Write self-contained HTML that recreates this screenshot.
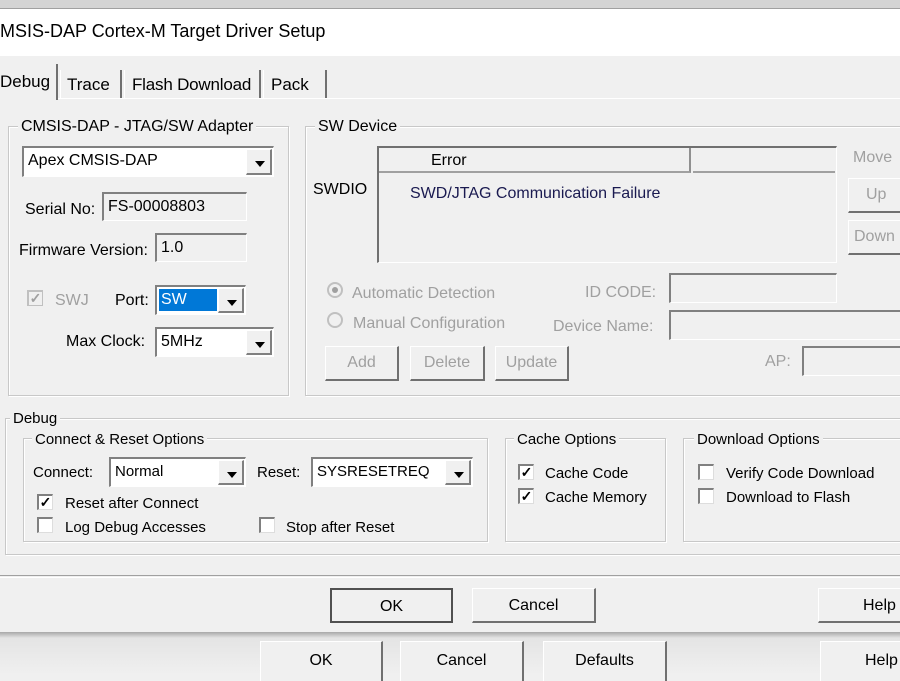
<!DOCTYPE html>
<html><head><meta charset="utf-8"><style>
*{box-sizing:border-box;margin:0;padding:0}
body{width:900px;height:675px;overflow:hidden;background:#f0f0f0;font-family:"Liberation Sans",sans-serif;font-size:16px;color:#000;position:relative}
.a{position:absolute;white-space:nowrap}
.t{margin-top:2px}
.grp{position:absolute;border:1px solid #c8c8c8;box-shadow:inset 1px 1px 0 #fff,1px 1px 0 #fff}
.lbl{position:absolute;background:#f0f0f0;padding:0 3px;line-height:18px;margin-top:1px}
.sunk{position:absolute;background:#f0f0f0;border-top:2px solid #808080;border-left:2px solid #808080;border-right:1px solid #fff;border-bottom:1px solid #fff;padding-left:4px;line-height:26px}
.white{background:#fff}
.dd{position:absolute;right:1px;top:1px;bottom:1px;width:26px;background:#f0f0f0;border-right:2px solid #808080;border-bottom:2px solid #808080;border-left:1px solid #fff;border-top:1px solid #fff}
.dd:after{content:"";position:absolute;left:8px;top:11px;border-left:5px solid transparent;border-right:5px solid transparent;border-top:6px solid #000}
.btn{position:absolute;background:#f0f0f0;border-top:1px solid #fff;border-left:1px solid #fff;border-right:2px solid #707070;border-bottom:2px solid #707070;text-align:center}
.dis{color:#a0a0a0}
.cb{position:absolute;width:16px;height:16px;background:#fff;border-top:2px solid #808080;border-left:2px solid #808080;border-right:1px solid #ddd;border-bottom:1px solid #ddd;font-size:14px;line-height:12px;text-align:center;font-weight:bold}
.rd{position:absolute;width:16px;height:16px;border-radius:50%;border:2px solid #c0c0c0;background:#f0f0f0}
</style></head><body>
<div class="a" style="left:0;top:0;width:900px;height:9px;background:#d4d4d4;border-bottom:1px solid #a0a0a0"></div>
<div class="a" style="left:0;top:9px;width:900px;height:47px;background:#fff"></div>
<div class="a" style="left:0;top:21px;font-size:18px">MSIS-DAP Cortex-M Target Driver Setup</div>
<div class="a" style="left:0;top:98px;width:900px;height:1px;background:#fff"></div>
<div class="a" style="left:0;top:64px;width:58px;height:36px;background:#f0f0f0;border-right:2px solid #707070"></div>
<div class="a" style="left:0;top:72px;font-size:17px">Debug</div>
<div class="a" style="left:60px;top:70px;width:62px;height:28px;border-right:2px solid #707070;border-left:1px solid #fff"></div>
<div class="a" style="left:67px;top:75px;font-size:17px">Trace</div>
<div class="a" style="left:124px;top:70px;width:137px;height:28px;border-right:2px solid #707070;border-left:1px solid #fff"></div>
<div class="a" style="left:132px;top:75px;font-size:17px;letter-spacing:-0.2px">Flash Download</div>
<div class="a" style="left:263px;top:70px;width:64px;height:28px;border-right:2px solid #707070;border-left:1px solid #fff"></div>
<div class="a" style="left:271px;top:75px;font-size:17px">Pack</div>
<div class="grp" style="left:8px;top:126px;width:281px;height:270px"></div>
<div class="lbl" style="left:18px;top:117px">CMSIS-DAP - JTAG/SW Adapter</div>
<div class="sunk white" style="left:22px;top:146px;width:252px;height:31px">Apex CMSIS-DAP<div class="dd"></div></div>
<div class="a t" style="left:25px;top:199px">Serial No:</div>
<div class="sunk" style="left:102px;top:192px;width:145px;height:29px">FS-00008803</div>
<div class="a t" style="left:19px;top:240px">Firmware Version:</div>
<div class="sunk" style="left:155px;top:233px;width:92px;height:29px">1.0</div>
<div class="cb" style="left:27px;top:290px;background:#f0f0f0;color:#a0a0a0;border-color:#c0c0c0">✓</div>
<div class="a dis t" style="left:55px;top:290px">SWJ</div>
<div class="a t" style="left:115px;top:290px">Port:</div>
<div class="sunk white" style="left:155px;top:285px;width:91px;height:30px;padding:2px"><div style="background:#0078d7;color:#fff;width:58px;height:22px;line-height:22px;padding-left:2px">SW</div><div class="dd"></div></div>
<div class="a t" style="left:66px;top:331px">Max Clock:</div>
<div class="sunk white" style="left:155px;top:327px;width:119px;height:30px">5MHz<div class="dd"></div></div>
<div class="grp" style="left:305px;top:126px;width:600px;height:270px"></div>
<div class="lbl" style="left:315px;top:117px">SW Device</div>
<div class="a t" style="left:313px;top:179px">SWDIO</div>
<div class="a" style="left:377px;top:146px;width:460px;height:117px;border-top:2px solid #707070;border-left:2px solid #707070;border-right:1px solid #fff;border-bottom:1px solid #fff"></div>
<div class="a" style="left:379px;top:148px;width:312px;height:25px;border-right:2px solid #909090;border-bottom:2px solid #a0a0a0;line-height:26px;padding-left:52px">Error</div>
<div class="a" style="left:693px;top:148px;width:142px;height:25px;border-bottom:2px solid #a0a0a0"></div>
<div class="a t" style="left:410px;top:183px;color:#1a1a50">SWD/JTAG Communication Failure</div>
<div class="a dis t" style="left:853px;top:147px">Move</div>
<div class="btn dis" style="left:848px;top:178px;width:60px;height:35px;line-height:32px;text-align:left;padding-left:17px">Up</div>
<div class="btn dis" style="left:848px;top:220px;width:60px;height:35px;line-height:32px;text-align:left;padding-left:5px">Down</div>
<div class="rd" style="left:327px;top:282px"><div style="width:6px;height:6px;border-radius:50%;background:#a0a0a0;margin:3px"></div></div>
<div class="a dis t" style="left:352px;top:283px">Automatic Detection</div>
<div class="rd" style="left:327px;top:312px"></div>
<div class="a dis t" style="left:353px;top:313px">Manual Configuration</div>
<div class="a dis t" style="left:585px;top:282px">ID CODE:</div>
<div class="sunk" style="left:669px;top:273px;width:168px;height:30px"></div>
<div class="a dis t" style="left:553px;top:316px">Device Name:</div>
<div class="sunk" style="left:669px;top:310px;width:240px;height:30px"></div>
<div class="btn dis" style="left:325px;top:346px;width:74px;height:35px;line-height:32px">Add</div>
<div class="btn dis" style="left:410px;top:346px;width:75px;height:35px;line-height:32px">Delete</div>
<div class="btn dis" style="left:495px;top:346px;width:74px;height:35px;line-height:32px">Update</div>
<div class="a dis t" style="left:765px;top:351px">AP:</div>
<div class="sunk" style="left:802px;top:346px;width:110px;height:30px"></div>
<div class="grp" style="left:5px;top:418px;width:900px;height:137px"></div>
<div class="lbl" style="left:10px;top:409px;font-size:15px">Debug</div>
<div class="grp" style="left:23px;top:438px;width:465px;height:104px"></div>
<div class="lbl" style="left:32px;top:430px;font-size:15px">Connect &amp; Reset Options</div>
<div class="a t" style="left:33px;top:462px;font-size:15px">Connect:</div>
<div class="sunk white" style="left:109px;top:457px;width:137px;height:30px;font-size:15px">Normal<div class="dd"></div></div>
<div class="a t" style="left:257px;top:462px;font-size:15px">Reset:</div>
<div class="sunk white" style="left:311px;top:457px;width:162px;height:30px;font-size:15px">SYSRESETREQ<div class="dd"></div></div>
<div class="cb" style="left:37px;top:494px">✓</div><div class="a t" style="left:65px;top:493px;font-size:15px">Reset after Connect</div>
<div class="cb" style="left:37px;top:517px"></div><div class="a t" style="left:65px;top:517px;font-size:15px">Log Debug Accesses</div>
<div class="cb" style="left:259px;top:517px"></div><div class="a t" style="left:286px;top:517px;font-size:15px">Stop after Reset</div>
<div class="grp" style="left:505px;top:438px;width:161px;height:104px"></div>
<div class="lbl" style="left:514px;top:430px;font-size:15px">Cache Options</div>
<div class="cb" style="left:518px;top:464px">✓</div><div class="a t" style="left:545px;top:463px;font-size:15px">Cache Code</div>
<div class="cb" style="left:518px;top:488px">✓</div><div class="a t" style="left:545px;top:487px;font-size:15px">Cache Memory</div>
<div class="grp" style="left:683px;top:438px;width:230px;height:104px"></div>
<div class="lbl" style="left:694px;top:430px;font-size:15px">Download Options</div>
<div class="cb" style="left:698px;top:464px"></div><div class="a t" style="left:726px;top:463px;font-size:15px">Verify Code Download</div>
<div class="cb" style="left:698px;top:488px"></div><div class="a t" style="left:726px;top:487px;font-size:15px">Download to Flash</div>
<div class="a" style="left:0;top:575px;width:900px;height:3px;border-top:1px solid #a0a0a0;border-bottom:1px solid #fff"></div>
<div class="btn" style="left:330px;top:588px;width:123px;height:35px;line-height:33px;border:2px solid #505050">OK</div>
<div class="btn" style="left:472px;top:588px;width:124px;height:35px;line-height:33px">Cancel</div>
<div class="btn" style="left:818px;top:588px;width:95px;height:35px;line-height:33px;text-align:left;padding-left:44px">Help</div>
<div class="a" style="left:0;top:632px;width:900px;height:43px;background:linear-gradient(#a8a8a8,#e4e4e4 6px,#f0f0f0)"></div>
<div class="btn" style="left:260px;top:641px;width:123px;height:40px;line-height:38px;border-bottom:0">OK</div>
<div class="btn" style="left:400px;top:641px;width:124px;height:40px;line-height:38px;border-bottom:0">Cancel</div>
<div class="btn" style="left:543px;top:641px;width:124px;height:40px;line-height:38px;border-bottom:0">Defaults</div>
<div class="btn" style="left:820px;top:641px;width:95px;height:40px;line-height:38px;border-bottom:0;text-align:left;padding-left:44px">Help</div>
</body></html>
